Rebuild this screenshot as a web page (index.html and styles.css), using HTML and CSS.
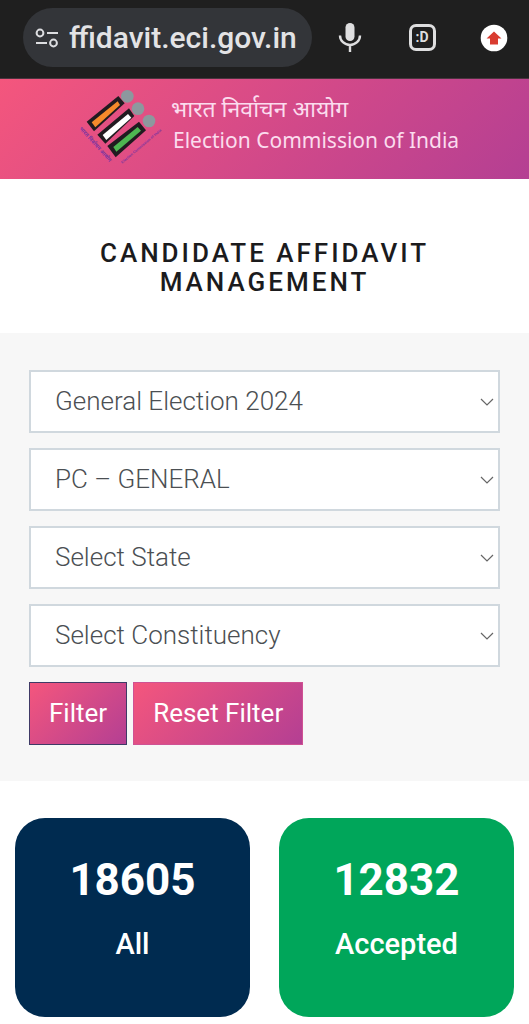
FILE: index.html
```html
<!DOCTYPE html>
<html lang="en">
<head>
<meta charset="utf-8">
<meta name="viewport" content="width=device-width, initial-scale=1">
<title>Candidate Affidavit Management</title>
<link rel="stylesheet" href="styles.css">
</head>
<body>
<div class="toolbar">
  <div class="address">
    <svg class="address-icon" viewBox="0 0 24 20" aria-hidden="true"><g fill="none" stroke="#dcdde0" stroke-width="2"><circle cx="5" cy="5" r="3.4"/><path d="M12 5h11M1 15h11"/><circle cx="18.500" cy="15" r="3.400"/></g></svg>
    <input class="address-input" type="text" aria-label="Address" value="ffidavit.eci.gov.in">
  </div>
  <div class="tools">
    <button class="tool" type="button" aria-label="Voice search">
      <svg viewBox="0 0 30 32" aria-hidden="true"><rect x="10.500" y="1" width="9" height="18" rx="4.500" fill="#dededf"/><path d="M5 13.500a10 9.500 0 0 0 20 0M15 23v7" fill="none" stroke="#dededf" stroke-width="2.400"/></svg>
    </button>
    <button class="tool" type="button" aria-label="Tabs"><span class="tabs">:D</span></button>
    <button class="tool" type="button" aria-label="Update">
      <svg viewBox="0 0 30 32" aria-hidden="true"><circle cx="15" cy="16" r="13.300" fill="#fff"/><path d="M15 9.500l7.500 7h-3.500v6h-8v-6H7.500z" fill="#d93c30"/></svg>
    </button>
  </div>
</div>
<header class="brand">
  <svg class="logo" viewBox="24 33 249 228" role="img" aria-label="Election Commission of India logo">
    <g fill="#8d989e"><circle cx="172" cy="55" r="19"/><circle cx="204" cy="92" r="19"/><circle cx="237" cy="129" r="19"/></g>
    <g fill="#211b20"><path d="M50 131L145 54L164 76L72 160z"/><path d="M82 170L177 91L193 114L106 197z"/><path d="M112 204L207 131L228 157L137 238z"/></g>
    <path d="M65 133L143 70L150 81L76 148z" fill="#f58a2b"/>
    <path d="M98 171L174 108L184 119L109 186z" fill="#fff"/>
    <path d="M130 207L203 147L213 158L139 221z" fill="#4eb651"/>
    <g class="logo-text"><text class="logo-hi" x="27" y="152" transform="rotate(48 27 152)">भारत निर्वाचन आयोग</text><text x="157" y="257" transform="rotate(-40 157 257)">Election Commission of India</text></g>
  </svg>
  <div class="brand-text">
    <span class="brand-hi" lang="hi">भारत निर्वाचन आयोग</span>
    <span class="brand-en">Election Commission of India</span>
  </div>
</header>
<main>
  <h1 class="title">Candidate Affidavit Management</h1>
  <form class="filters">
    <select class="field" aria-label="Election"><option>General Election 2024</option></select>
    <select class="field" aria-label="Election type"><option>PC – GENERAL</option></select>
    <select class="field" aria-label="State"><option>Select State</option></select>
    <select class="field" aria-label="Constituency"><option>Select Constituency</option></select>
    <div class="actions">
      <button class="btn btn-primary" type="button">Filter</button>
      <button class="btn" type="reset">Reset Filter</button>
    </div>
  </form>
  <section class="stats" aria-label="Totals">
    <div class="card card-all"><strong class="count">18605</strong><span class="label">All</span></div>
    <div class="card card-accepted"><strong class="count">12832</strong><span class="label">Accepted</span></div>
  </section>
</main>
</body>
</html>
```
FILE: styles.css
```css
* { box-sizing: border-box; }
body { margin: 0; background: #fff; color: #1b1b1d; font-family: Roboto, "Noto Sans", sans-serif; }

.toolbar { display: flex; align-items: center; gap: 23px; padding: 8px 20px 11px 23px; background: #1f1f1f; border-bottom: 1px solid #4b343f; }
.address { display: flex; flex: 1; align-items: center; gap: 10px; min-width: 0; height: 59px; padding: 0 12px; border-radius: 30px; background: #333539; }
.address-icon { flex: none; width: 24px; height: 20px; }
.address-input { flex: 1; min-width: 0; width: 100%; padding: 0; border: 0; outline: 0; background: transparent; color: #e3e3e5; font: 500 30px/40px Roboto, sans-serif; }
.tools { display: flex; gap: 42px; }
.tool { display: flex; align-items: center; justify-content: center; width: 30px; height: 32px; padding: 0; border: 0; background: transparent; color: #dededf; }
.tool svg { width: 30px; height: 32px; }
.tabs { width: 27px; height: 27px; border: 3px solid #dededf; border-radius: 7px; font: 700 14px/20px Roboto, sans-serif; text-align: center; }

.brand { display: flex; align-items: flex-start; gap: 10px; min-height: 100px; padding: 10px 16px 14px 78px; background: linear-gradient(135deg, #f4567d 0%, #d84b87 45%, #b43f93 100%); }
.logo { flex: none; width: 83px; height: 76px; overflow: visible; }
.logo-text { fill: #7a35a0; font: 700 11px "Liberation Sans", sans-serif; }
.logo-hi { font: 700 16px "Noto Sans", sans-serif; }
.brand-text { display: flex; flex-direction: column; color: #fbdcee; white-space: nowrap; }
.brand-hi { padding-top: 2px; font: 400 23px/34px "Noto Sans", sans-serif; }
.brand-en { padding-left: 2px; font: 400 21px/30px "Noto Sans", sans-serif; }

.title { margin: 0; padding: 60px 30px 36px; font-size: 26px; font-weight: 500; line-height: 29px; letter-spacing: 3px; text-align: center; text-transform: uppercase; }
.filters { display: flex; flex-direction: column; gap: 15px; padding: 37px 29px 36px; background: #f7f7f7; }
.field { appearance: none; width: 100%; height: 63px; padding: 0 24px 2px; border: 2px solid #d0d8de; border-radius: 0; background: #fff url("data:image/svg+xml,%3Csvg xmlns='http://www.w3.org/2000/svg' width='14' height='8'%3E%3Cpath d='M1 1l6 6 6-6' fill='none' stroke='%23666' stroke-width='1.2'/%3E%3C/svg%3E") no-repeat right 4px center; color: #4b4f53; font: 300 26px/36px Roboto, sans-serif; }
.actions { display: flex; gap: 6px; }
.btn { height: 63px; padding: 0 19px 2px; border: 1px solid #cf5293; border-radius: 0; background: linear-gradient(135deg, #f4567d, #b43f93); color: #fff; font: 400 26px/36px Roboto, sans-serif; }
.btn-primary { border-color: #3f3a66; }

.stats { display: grid; grid-template-columns: 1fr 1fr; gap: 29px; padding: 37px 15px 7px; }
.card { display: flex; flex-direction: column; align-items: center; gap: 16px; padding: 34px 15px 53px; border-radius: 30px; color: #fff; }
.card-all { background: #002b50; }
.card-accepted { background: #00a65a; }
.count { font-size: 44px; font-weight: 700; line-height: 56px; }
.label { font-size: 29px; font-weight: 500; line-height: 40px; }
```
